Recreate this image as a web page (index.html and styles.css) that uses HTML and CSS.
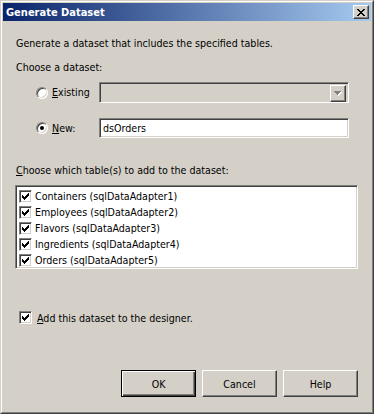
FILE: index.html
```html
<!DOCTYPE html>
<html lang="en">
<head>
<meta charset="UTF-8">
<title>Generate Dataset</title>
<link rel="stylesheet" href="styles.css">
</head>
<body>
<svg class="defs" width="0" height="0">
  <defs>
    <symbol id="tick" viewBox="0 0 7 7">
      <path d="M0 2h1v3H0zM1 3h1v3H1zM2 4h1v3H2zM3 3h1v3H3zM4 2h1v3H4zM5 1h1v3H5zM6 0h1v3H6z"/>
    </symbol>
  </defs>
</svg>

<div class="window">
  <div class="frame">
    <div class="titlebar">
      <span class="title">Generate Dataset</span>
      <button class="close-btn">
        <svg width="8" height="7" viewBox="0 0 8 7"><path d="M0 0h2v1H0zM6 0h2v1H6zM1 1h2v1H1zM5 1h2v1H5zM2 2h4v1H2zM3 3h2v1H3zM2 4h4v1H2zM1 5h2v1H1zM5 5h2v1H5zM0 6h2v1H0zM6 6h2v1H6z"/></svg>
      </button>
    </div>

    <div class="client">
      <p class="intro">Generate a dataset that includes the specified tables.</p>
      <p class="label">Choose a dataset:</p>

      <div class="choice-row existing">
        <span class="radio"></span>
        <span class="choice-label"><u>E</u>xisting</span>
        <div class="combo">
          <div class="combo-btn">
            <svg width="8" height="5" viewBox="0 0 8 5">
              <path fill="#fff" d="M1 1h7v1H1zM2 2h5v1H2zM3 3h3v1H3zM4 4h1v1H4z"/>
              <path fill="#808080" d="M0 0h7v1H0zM1 1h5v1H1zM2 2h3v1H2zM3 3h1v1H3z"/>
            </svg>
          </div>
        </div>
      </div>

      <div class="choice-row new">
        <span class="radio checked"></span>
        <span class="choice-label"><u>N</u>ew:</span>
        <div class="textbox">dsOrders</div>
      </div>

      <p class="label tables-label"><u>C</u>hoose which table(s) to add to the dataset:</p>
      <ul class="listbox">
        <li><span class="check"><svg><use href="#tick"/></svg></span>Containers (sqlDataAdapter1)</li>
        <li><span class="check"><svg><use href="#tick"/></svg></span>Employees (sqlDataAdapter2)</li>
        <li><span class="check"><svg><use href="#tick"/></svg></span>Flavors (sqlDataAdapter3)</li>
        <li><span class="check"><svg><use href="#tick"/></svg></span>Ingredients (sqlDataAdapter4)</li>
        <li><span class="check"><svg><use href="#tick"/></svg></span>Orders (sqlDataAdapter5)</li>
      </ul>

      <div class="add-row">
        <span class="check"><svg><use href="#tick"/></svg></span>
        <span><u>A</u>dd this dataset to the designer.</span>
      </div>

      <div class="buttons">
        <button class="btn default">OK</button>
        <button class="btn">Cancel</button>
        <button class="btn">Help</button>
      </div>
    </div>
  </div>
</div>
</body>
</html>
```

FILE: styles.css
```css
* { box-sizing: border-box; }
body { margin: 0; font-family: "DejaVu Sans Condensed", "DejaVu Sans", sans-serif; font-size: 10.6px; color: #000; }
.defs { position: absolute; }
p { margin: 0; line-height: 13px; }
u { text-decoration: underline; text-underline-offset: 1px; }

.window {
    width: 374px;
    height: 414px;
    border: 1px solid;
    border-color: #d4d0c8 #404040 #404040 #d4d0c8;
    background: #d4d0c8;
}
.frame {
    height: 100%;
    border: 1px solid;
    border-color: #fff #808080 #808080 #fff;
    padding: 1px;
    display: flex;
    flex-direction: column;
}

.titlebar {
    flex: none;
    height: 18px;
    display: flex;
    align-items: center;
    justify-content: space-between;
    padding: 0 2px 0 3px;
    background: linear-gradient(to right, #0a246a, #a6caf0);
}
.title { color: #fff; font-weight: bold; font-size: 11px; line-height: 13px; }
.close-btn {
    width: 16px;
    height: 14px;
    padding: 0;
    display: flex;
    align-items: center;
    justify-content: center;
    background: #d4d0c8;
    border: 1px solid;
    border-color: #fff #404040 #404040 #fff;
    box-shadow: inset -1px -1px #808080;
}

.client { flex: 1; padding: 16px 13px 0 13px; }
.label { margin-top: 11px; }

.choice-row { display: flex; align-items: center; padding-left: 20px; }
.existing { margin-top: 8px; height: 21px; }
.new { margin-top: 15px; height: 20px; }
.choice-label { width: 51px; padding-left: 4px; line-height: 13px; }

.radio {
    width: 12px;
    height: 12px;
    flex: none;
    border-radius: 50%;
    background: #fff;
    border: 1px solid;
    border-color: #808080 #fff #fff #808080;
    box-shadow: inset 1px 1px #404040, inset -1px -1px #d4d0c8;
    display: flex;
    align-items: center;
    justify-content: center;
}
.radio.checked::after {
    content: "";
    width: 4px;
    height: 4px;
    border-radius: 50%;
    background: #000;
}

.combo, .textbox, .listbox, .check {
    border: 1px solid;
    border-color: #808080 #fff #fff #808080;
    box-shadow: inset 1px 1px #404040, inset -1px -1px #d4d0c8;
}
.combo {
    width: 250px;
    height: 21px;
    background: #d4d0c8;
    padding: 2px;
    display: flex;
    justify-content: flex-end;
}
.combo-btn {
    width: 16px;
    height: 17px;
    border: 1px solid;
    border-color: #fff #404040 #404040 #fff;
    box-shadow: inset -1px -1px #808080;
    display: flex;
    align-items: center;
    justify-content: center;
}
.textbox {
    width: 250px;
    height: 20px;
    background: #fff;
    padding: 3px 3px;
    line-height: 13px;
}

.tables-label { margin-top: 26px; }
.listbox {
    list-style: none;
    margin: 8px 0 0 -1px;
    padding: 2px 0 0 2px;
    width: 343px;
    height: 84px;
    background: #fff;
}
.listbox li { height: 16px; display: flex; align-items: center; }
.listbox .check { margin: 0 3px 0 1px; }

.check {
    width: 13px;
    height: 13px;
    flex: none;
    background: #fff;
    display: flex;
    align-items: center;
    justify-content: center;
}
.check svg { width: 7px; height: 7px; fill: #000; }

.add-row { margin-top: 42px; display: flex; align-items: center; height: 13px; padding-left: 3px; }
.add-row .check { margin-right: 5px; }

.buttons { margin-top: 46px; display: flex; justify-content: flex-end; gap: 6px; }
.btn {
    width: 75px;
    height: 27px;
    padding: 0;
    font: inherit;
    color: #000;
    background: #d4d0c8;
    border: 1px solid;
    border-color: #fff #404040 #404040 #fff;
    box-shadow: inset -1px -1px #808080;
}
.btn.default {
    border: 1px solid #000;
    box-shadow: inset 1px 1px #fff, inset -1px -1px #404040, inset -2px -2px #808080;
}
```
